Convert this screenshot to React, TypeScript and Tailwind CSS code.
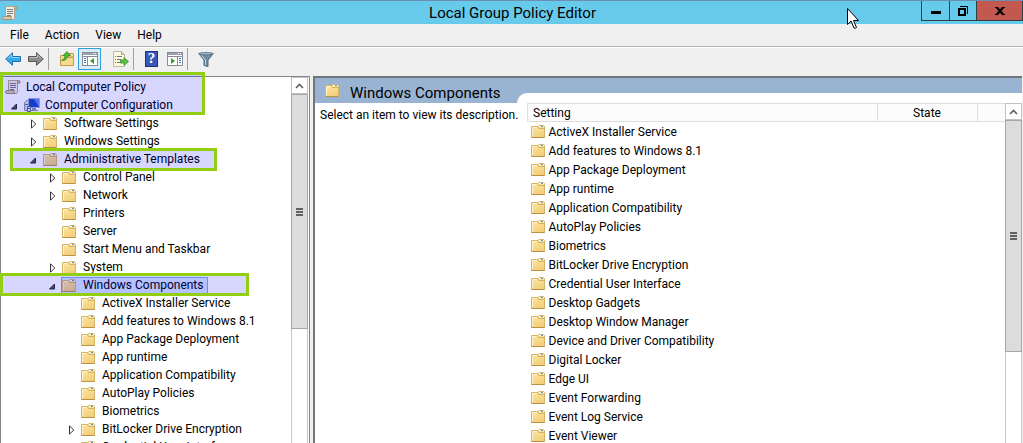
import { useState } from "react";
import type { ReactNode } from "react";

interface TreeNode {
  label: string;
  level: number;
  icon: "policy" | "computer" | "folder";
  state?: "open" | "closed";
}

const TREE: TreeNode[] = [
  { label: "Local Computer Policy", level: 0, icon: "policy" },
  { label: "Computer Configuration", level: 1, icon: "computer", state: "open" },
  { label: "Software Settings", level: 2, icon: "folder", state: "closed" },
  { label: "Windows Settings", level: 2, icon: "folder", state: "closed" },
  { label: "Administrative Templates", level: 2, icon: "folder", state: "open" },
  { label: "Control Panel", level: 3, icon: "folder", state: "closed" },
  { label: "Network", level: 3, icon: "folder", state: "closed" },
  { label: "Printers", level: 3, icon: "folder" },
  { label: "Server", level: 3, icon: "folder" },
  { label: "Start Menu and Taskbar", level: 3, icon: "folder" },
  { label: "System", level: 3, icon: "folder", state: "closed" },
  { label: "Windows Components", level: 3, icon: "folder", state: "open" },
  { label: "ActiveX Installer Service", level: 4, icon: "folder" },
  { label: "Add features to Windows 8.1", level: 4, icon: "folder" },
  { label: "App Package Deployment", level: 4, icon: "folder" },
  { label: "App runtime", level: 4, icon: "folder" },
  { label: "Application Compatibility", level: 4, icon: "folder" },
  { label: "AutoPlay Policies", level: 4, icon: "folder" },
  { label: "Biometrics", level: 4, icon: "folder" },
  { label: "BitLocker Drive Encryption", level: 4, icon: "folder", state: "closed" },
  { label: "Credential User Interface", level: 4, icon: "folder" },
];

const SETTINGS = [
  "ActiveX Installer Service",
  "Add features to Windows 8.1",
  "App Package Deployment",
  "App runtime",
  "Application Compatibility",
  "AutoPlay Policies",
  "Biometrics",
  "BitLocker Drive Encryption",
  "Credential User Interface",
  "Desktop Gadgets",
  "Desktop Window Manager",
  "Device and Driver Compatibility",
  "Digital Locker",
  "Edge UI",
  "Event Forwarding",
  "Event Log Service",
  "Event Viewer",
];

const INDENT = ["pl-1", "pl-1", "pl-[23px]", "pl-[42px]", "pl-[61px]"];

// ================= ICONS =================
function FolderIcon() {
  return (
    <svg width="14" height="13" viewBox="0 0 14 13" className="shrink-0" aria-hidden="true">
      <defs>
        <linearGradient id="folderFill" x1="0" y1="0" x2="0.4" y2="1">
          <stop offset="0" stopColor="#ffe9a6" />
          <stop offset="1" stopColor="#f2cf7c" />
        </linearGradient>
      </defs>
      <path d="M0.5 1.5 H6.5 L8.5 0.5 H12.5 L13.5 1.5 V12.5 H0.5 Z" fill="url(#folderFill)" stroke="#d3b469" />
      <path d="M8 1.5 H13" stroke="#ffffff" />
      <path d="M10 1.5 H12" stroke="#4f93cf" />
      <path d="M6.5 2 L7.5 3.5 H13" fill="none" stroke="#d3b469" />
      <path d="M1.5 11.5 V2.5 H6" fill="none" stroke="#fff3c8" />
      <path d="M0.5 12.5 H13.5" stroke="#b89243" />
    </svg>
  );
}

function PolicyIcon() {
  return (
    <svg width="16" height="16" viewBox="0 0 16 16" className="shrink-0" aria-hidden="true">
      <path
        d="M3.5 1.5 H13 C14.6 1.5 15 2.5 14.6 4 H12.5 V12 C12.5 14 12 14.5 10.5 14.5 H1.5 C0.4 14 0.3 12.5 1.5 11.5 H3.5 Z"
        fill="#f4efe0"
        stroke="#b3a588"
      />
      <path d="M12.5 4 C12.3 2.6 12.6 1.5 13.5 1.5 C15.2 1.6 15.2 3.2 14.6 4 Z" fill="#d6c6a5" stroke="#a08f72" />
      <path d="M1.5 11.5 H9.5 C8.6 12.5 9 14.3 10.5 14.5 H1.5 C0.2 13.6 0.5 12 1.5 11.5 Z" fill="#d8cbb0" stroke="#a08f72" />
      <path d="M5 4.5 H11 M5 6.5 H11 M5 8.5 H11 M5 10.5 H9" stroke="#7f7b83" />
    </svg>
  );
}

function ComputerIcon() {
  return (
    <svg width="16" height="16" viewBox="0 0 16 16" className="shrink-0" aria-hidden="true">
      <path d="M0.5 5.5 L2.5 3.5 H4.5 V13.5 H0.5 Z" fill="#d5dbe5" stroke="#8c97ab" />
      <path d="M1 7.5 H4" stroke="#68758c" />
      <path d="M4.5 1.5 H15.5 V10.5 H4.5 Z" fill="#1d47c4" stroke="#a9b6cc" />
      <path d="M10 2 H15 V10 Z" fill="#5d8df0" />
      <path d="M8 11 H12 V13 H14 V14 H6 V13 H8 Z" fill="#8a97ab" />
      <path d="M3.5 14.5 V9.5 H6.5 V14.5 Z" fill="#eef1f6" stroke="#5b6780" />
      <path d="M4 11.5 H6" stroke="#2f62d0" />
    </svg>
  );
}

function Expander({ state }: { state?: "open" | "closed" }) {
  return (
    <svg width="19" height="12" viewBox="0 0 19 12" className="shrink-0" aria-hidden="true">
      {state === "closed" && <path d="M7.5 2.8 V11.2 L11.7 7 Z" fill="#ffffff" stroke="#333333" />}
      {state === "open" && <path d="M11.5 5 V10 H6.5 Z" fill="#555555" stroke="#2a2a2a" />}
    </svg>
  );
}

function ArrowIcon({ dir }: { dir: "back" | "forward" }) {
  const back = dir === "back";
  return (
    <svg width="16" height="14" viewBox="0 0 16 14" aria-hidden="true">
      <path
        d={
          back
            ? "M0.7 7 L7.5 0.7 V4.5 H15.5 V9.5 H7.5 V13.3 Z"
            : "M15.3 7 L8.5 0.7 V4.5 H0.5 V9.5 H8.5 V13.3 Z"
        }
        fill={back ? "#35a8ea" : "#8c8c8c"}
        stroke={back ? "#1d6fb0" : "#555555"}
      />
      <path
        d={back ? "M2.5 6.6 L6.6 2.8 V5.5 H14.5" : "M1.5 5.5 H9.4 V2.8 L13.5 6.6"}
        fill="none"
        stroke={back ? "#90d7fa" : "#bcbcbc"}
      />
    </svg>
  );
}

function UpFolderIcon() {
  return (
    <svg width="16" height="16" viewBox="0 0 16 16" aria-hidden="true">
      <path d="M8 4.5 L9.5 2.5 H14.5 V6 H8 Z" fill="#f5dc98" stroke="#c09a4c" />
      <path d="M1.5 4.5 H7.5 L8.5 6.5 H14.5 V14.5 H1.5 Z" fill="#f8dc8e" stroke="#c09a4c" />
      <path
        d="M2.5 9.5 C4.8 8.5 5.8 7 6 4.5 H4 L8 0.6 L11.5 4.5 H9 C8.6 7.5 6.5 9.8 2.5 9.5 Z"
        fill="#52bd3a"
        stroke="#2d8a22"
        strokeWidth="0.8"
      />
    </svg>
  );
}

function PaneIcon({ flip }: { flip?: boolean }) {
  return (
    <svg width="16" height="14" viewBox="0 0 16 14" shapeRendering="crispEdges" aria-hidden="true">
      <rect x="0.5" y="0.5" width="15" height="13" fill="#ffffff" stroke="#868d98" />
      <rect x="1" y="1" width="14" height="2" fill="#9ba3ae" />
      <path d="M11 1.5 H12 M13 1.5 H14" stroke="#ffffff" />
      <path d="M1 4.5 H15" stroke="#868d98" />
      <path d={flip ? "M10.5 5 V13" : "M5.5 5 V13"} stroke="#868d98" />
      <path
        d={flip ? "M12 6.5 H14 M12 8.5 H14 M12 10.5 H14" : "M2 6.5 H4 M2 8.5 H4 M2 10.5 H4"}
        stroke="#3c6fb5"
      />
      <path
        d={flip ? "M4 6 V12 L8 9 Z" : "M12 6 V12 L8 9 Z"}
        fill="#3a9c2c"
        shapeRendering="auto"
      />
    </svg>
  );
}

function ExportIcon() {
  return (
    <svg width="16" height="16" viewBox="0 0 16 16" aria-hidden="true">
      <path d="M0.5 0.5 H8.5 L11.5 3.5 V15.5 H0.5 Z" fill="#fdf8df" stroke="#bfbba4" />
      <path d="M8.5 0.5 V3.5 H11.5" fill="none" stroke="#a9a58e" />
      <path d="M4 5.5 H9 M4 8.5 H8 M4 11.5 H8" stroke="#77757c" />
      <path d="M2 5.5 H3 M2 8.5 H3 M2 11.5 H3" stroke="#77757c" />
      <path d="M7.5 9 H11 V6.6 L15.5 10.5 L11 14.4 V12 H7.5 Z" fill="#5cc03f" stroke="#35912a" strokeWidth="0.8" />
    </svg>
  );
}

function FilterIcon() {
  return (
    <svg width="16" height="15" viewBox="0 0 16 15" aria-hidden="true">
      <path d="M0.7 1.5 L6 8 V13.5 L10 14.4 V8 L15.3 1.5 Z" fill="#6f8ea6" stroke="#4b667b" />
      <path d="M3 3 L7.5 8 V13" fill="none" stroke="#c3d6e3" />
      <ellipse cx="8" cy="1.7" rx="7" ry="1.2" fill="#a9c0cf" stroke="#4b667b" strokeWidth="0.8" />
    </svg>
  );
}

function Pointer() {
  return (
    <svg width="13" height="22" viewBox="0 0 13 22" className="absolute left-[847px] top-2" aria-hidden="true">
      <path
        d="M0.5 0.5 V16.5 L4 13 L7 20 Q8 21 9.5 19.5 L6.5 12.5 H11.5 Z"
        fill="#ffffff"
        stroke="#000000"
      />
    </svg>
  );
}

// ================= SMALL PARTS =================
function ToolButton({ label, active, children }: { label: string; active?: boolean; children: ReactNode }) {
  return (
    <button
      type="button"
      aria-label={label}
      className={`flex h-[22px] w-[23px] items-center justify-center ${
        active ? "border border-[#2e9fdb] bg-[#d9ecf9]" : ""
      }`}
    >
      {children}
    </button>
  );
}

function Separator() {
  return <div className="mr-1.5 ml-px h-[22px] w-px bg-[#a0a0a0]" />;
}

function ScrollBar({ thumb }: { thumb: string }) {
  return (
    <div className="flex w-[17px] shrink-0 flex-col bg-white">
      <button
        type="button"
        aria-label="Scroll up"
        className="flex h-[17px] shrink-0 items-center justify-center border border-[#c2c2c2] bg-white"
      >
        <svg width="9" height="6" viewBox="0 0 9 6" aria-hidden="true">
          <path d="M1 5 L4.5 1.5 L8 5" fill="none" stroke="#606060" strokeWidth="1.6" />
        </svg>
      </button>
      <div className="flex-1 border-x border-[#c8c8c8]">
        <div
          className={`-mx-px flex flex-col items-center justify-center gap-px border border-[#a6a6a6] bg-[#dcdcdc] ${thumb}`}
        >
          <div className="h-0.5 w-[7px] bg-[#606060]" />
          <div className="h-0.5 w-[7px] bg-[#606060]" />
          <div className="h-0.5 w-[7px] bg-[#606060]" />
        </div>
      </div>
    </div>
  );
}

function Highlight({ className }: { className: string }) {
  return (
    <div
      className={`pointer-events-none absolute border-3 border-[#92cf12] bg-[rgba(0,0,255,0.16)] ${className}`}
    />
  );
}

// ================= APP =================
export default function App() {
  const [selected, setSelected] = useState("3-Windows Components");

  return (
    <div className="relative flex h-screen flex-col overflow-hidden bg-[#f0f0f0] font-['Roboto','Open_Sans',sans-serif] text-xs text-black">
      {/* TITLE BAR */}
      <header className="flex h-6 shrink-0 items-start border-t border-[#6b8fb0] bg-[#67caeb]">
        <div className="flex h-full flex-1 items-center pl-0.5">
          <PolicyIcon />
        </div>
        <h1 className="text-[15px] leading-6">Local Group Policy Editor</h1>
        <div className="flex flex-1 justify-end">
          <button
            type="button"
            aria-label="Minimize"
            className="flex h-5 w-[29px] items-center justify-center border border-t-0 border-[#2f3f48]"
          >
            <span className="mt-1 h-[3px] w-2.5 bg-black" />
          </button>
          <button
            type="button"
            aria-label="Restore"
            className="flex h-5 w-[26px] items-center justify-center border-b border-[#2f3f48]"
          >
            <svg width="10" height="10" viewBox="0 0 10 10" shapeRendering="crispEdges" aria-hidden="true">
              <rect x="1" y="3" width="6" height="6" fill="none" stroke="#000000" strokeWidth="2" />
              <path d="M2 0.5 H9.5 V8" fill="none" stroke="#000000" />
            </svg>
          </button>
          <button
            type="button"
            aria-label="Close"
            className="flex h-5 w-[47px] items-center justify-center border border-t-0 border-[#2f3f48] bg-[#c3584e]"
          >
            <svg width="10" height="8" viewBox="0 0 10 8" aria-hidden="true">
              <path d="M1.5 0 L8.5 8 M8.5 0 L1.5 8" stroke="#000000" strokeWidth="2.2" />
              <path d="M0 0.5 H3 M7 0.5 H10 M0 7.5 H3 M7 7.5 H10" stroke="#000000" />
            </svg>
          </button>
        </div>
      </header>

      {/* MENU */}
      <nav className="flex h-[23px] shrink-0 items-center gap-4 border-b border-[#b4b4b4] pl-2.5">
        <button type="button">File</button>
        <button type="button">Action</button>
        <button type="button">View</button>
        <button type="button">Help</button>
      </nav>

      {/* TOOLBAR */}
      <div className="flex h-[29px] shrink-0 items-start border-t border-white pl-px">
        <ToolButton label="Back">
          <ArrowIcon dir="back" />
        </ToolButton>
        <ToolButton label="Forward">
          <ArrowIcon dir="forward" />
        </ToolButton>
        <Separator />
        <ToolButton label="Up one level">
          <UpFolderIcon />
        </ToolButton>
        <ToolButton label="Show or hide console tree" active>
          <PaneIcon />
        </ToolButton>
        <div className="w-2" />
        <ToolButton label="Export list">
          <ExportIcon />
        </ToolButton>
        <Separator />
        <ToolButton label="Help">
          <span className="flex h-4 w-[13px] items-center justify-center border border-[#1c3280] bg-[#3a58b8] font-['Liberation_Serif',serif] text-[15px] font-bold text-white">
            ?
          </span>
        </ToolButton>
        <ToolButton label="Show or hide action pane">
          <PaneIcon flip />
        </ToolButton>
        <Separator />
        <ToolButton label="Filter">
          <FilterIcon />
        </ToolButton>
      </div>

      <main className="flex min-h-0 flex-1 gap-[3px]">
        {/* CONSOLE TREE */}
        <section className="relative w-[310px] shrink-0">
          <div className="flex h-full border border-b-0 border-[#828790] bg-white pr-px">
            <ul className="min-w-0 flex-1 overflow-hidden pt-px">
              {TREE.map((node) => {
                const id = `${node.level}-${node.label}`;
                const isSelected = id === selected;
                return (
                  <li key={id} className={`flex h-[18px] items-center ${INDENT[node.level]}`}>
                    {node.level > 0 && <Expander state={node.state} />}
                    <button
                      type="button"
                      onClick={() => setSelected(id)}
                      className={`-ml-px flex h-[17px] items-center border pr-[3px] whitespace-nowrap ${
                        isSelected ? "border-[#84acdd] bg-[#d9e8ff]" : "border-transparent"
                      }`}
                    >
                      {node.icon === "policy" && <PolicyIcon />}
                      {node.icon === "computer" && <ComputerIcon />}
                      {node.icon === "folder" && <FolderIcon />}
                      <span className={node.icon === "folder" ? "pl-[7px]" : "pl-[5px]"}>{node.label}</span>
                    </button>
                  </li>
                );
              })}
            </ul>
            <ScrollBar thumb="h-[235px]" />
          </div>
          <Highlight className="-top-1 left-0 h-[43px] w-[205px]" />
          <Highlight className="top-[72px] left-2.5 h-[23px] w-[207px]" />
          <Highlight className="top-[197px] left-0 h-[23px] w-[249px]" />
        </section>

        {/* DETAILS */}
        <section className="mr-px flex min-w-0 flex-1 flex-col border-t-2 border-l-2 border-[#72767c] bg-white">
          <div className="flex h-[25px] shrink-0 items-center bg-[#99b3d2]">
            <div className="flex w-[202px] shrink-0 items-center gap-[11px] pl-2.5 whitespace-nowrap">
              <FolderIcon />
              <h2 className="pt-1 text-[15px] leading-5">Windows Components</h2>
            </div>
            <div className="h-2.5 flex-1 self-end rounded-tl-[10px] bg-white" />
          </div>
          <div className="flex min-h-0 flex-1">
            <p className="w-[212px] shrink-0 pt-1 pl-[5px] whitespace-nowrap">
              Select an item to view its description.
            </p>
            <div className="min-w-0 flex-1 overflow-hidden">
              <table className="w-full table-fixed border-collapse">
                <thead>
                  <tr className="h-[18px] bg-[#fcfcfc]">
                    <th className="border border-[#dedede] p-0 pl-[5px] text-left leading-4 font-normal">Setting</th>
                    <th className="w-[100px] border border-[#dedede] p-0 leading-4 font-normal">State</th>
                    <th className="w-7 border border-r-0 border-[#dedede] p-0" />
                  </tr>
                </thead>
                <tbody>
                  {SETTINGS.map((name) => (
                    <tr key={name}>
                      <td className="p-0">
                        <div className="flex h-[19px] items-center gap-1 pl-[3px]">
                          <FolderIcon />
                          <span>{name}</span>
                        </div>
                      </td>
                      <td className="p-0" />
                      <td className="p-0" />
                    </tr>
                  ))}
                </tbody>
              </table>
            </div>
            <ScrollBar thumb="h-[232px]" />
          </div>
        </section>
      </main>

      <Pointer />
    </div>
  );
}
